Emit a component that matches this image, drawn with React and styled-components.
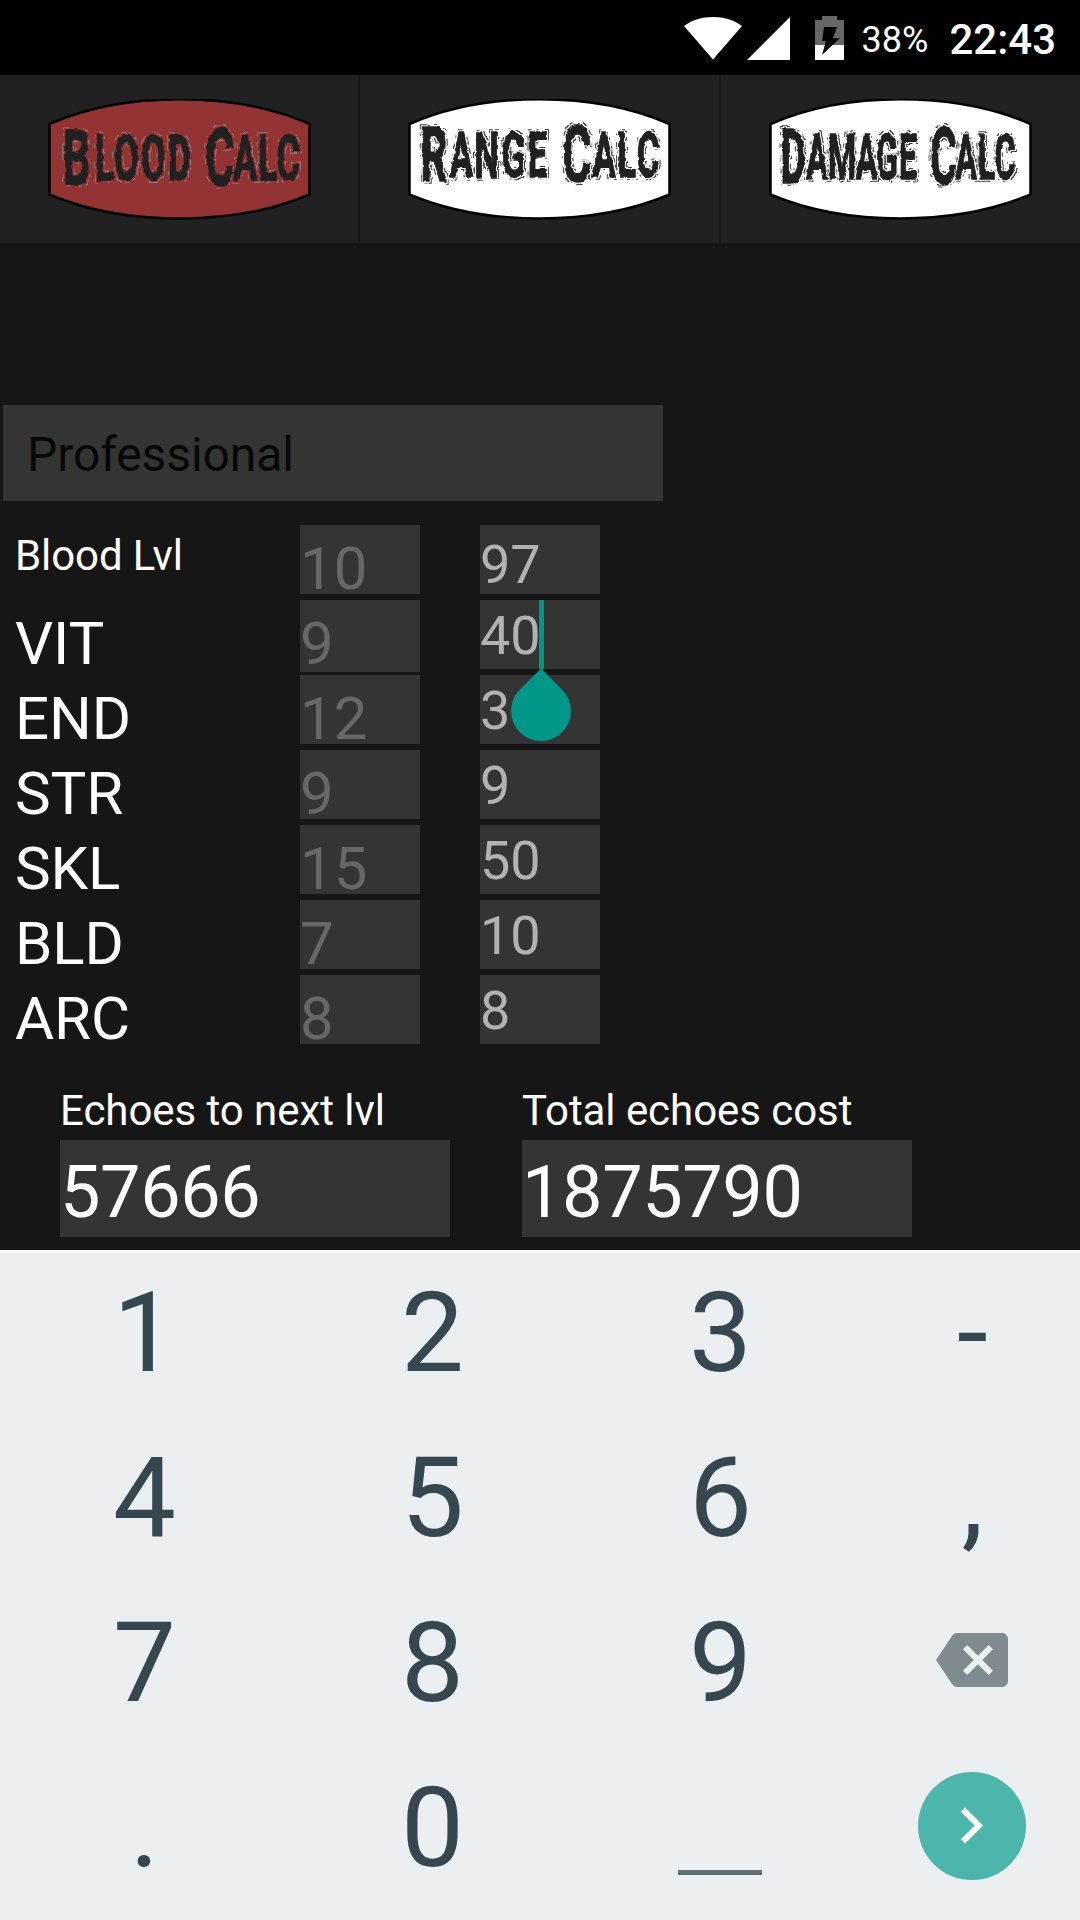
import React from "react";
import styled, { createGlobalStyle, ThemeProvider } from "styled-components";

const theme = {
  background: "#161616",
  tab: "#212121",
  field: "#343434",
  accent: "#009688",
  blood: "#943333",
  hint: "#676767",
  value: "#b2b2b2",
  keyboard: "#ebeff2",
  key: "#37474f",
};

const GlobalStyle = createGlobalStyle`
  * {
    box-sizing: border-box;
  }

  body {
    margin: 0;
    background-color: #161616;
    font-family: Roboto, "Noto Sans", sans-serif;
  }
`;

const St = {
  Screen: styled.div`
    display: flex;
    flex-direction: column;
    width: 1080px;
    height: 1920px;
    overflow: hidden;
    background-color: ${({ theme }) => theme.background};
  `,

  StatusBar: styled.header`
    display: flex;
    justify-content: flex-end;
    align-items: center;
    height: 75px;
    padding: 4px 24px 0 0;
    background-color: black;
    color: white;
  `,

  StatusIcon: styled.svg`
    display: block;
    width: ${({ $width }) => $width}px;
    height: 44px;
    margin: 0 ${({ $gap }) => $gap}px 4px 0;
  `,

  BatteryLevel: styled.span`
    font-size: 36px;
    margin-right: 21px;
  `,

  Clock: styled.span`
    font-size: 42px;
    font-weight: 500;
  `,

  Tabs: styled.nav`
    display: grid;
    grid-template-columns: 360px 361px 359px;
    height: 168px;
  `,

  Tab: styled.div`
    display: flex;
    padding: 24px 0 0 48px;
    background-color: ${({ theme }) => theme.tab};
    border-right: ${({ $last }) => ($last ? "none" : "2px solid #171717")};
  `,

  Badge: styled.svg`
    display: block;
    width: 263px;
    height: 121px;
  `,

  BadgeText: styled.text`
    font-family: Roboto, "Liberation Sans", sans-serif;
    font-weight: 700;
    font-size: 63px;
    fill: #212121;
    stroke: #212121;
    stroke-width: 1.4px;
    text-anchor: middle;
    text-transform: uppercase;
  `,

  Calculator: styled.main`
    display: flex;
    flex-direction: column;
    height: 1007px;
    padding-top: 162px;
  `,

  OriginSelect: styled.div`
    width: 660px;
    height: 96px;
    margin: 0 0 24px 3px;
    padding: 2px 24px 0;
    background-color: ${({ theme }) => theme.field};
    color: #070707;
    font-size: 48px;
    line-height: 96px;
    letter-spacing: -0.1px;
  `,

  StatList: styled.section`
    display: grid;
    grid-auto-rows: 69px;
    row-gap: 6px;
  `,

  StatRow: styled.div`
    display: grid;
    grid-template-columns: 285px 120px 120px;
    padding-left: 15px;
  `,

  StatName: styled.span`
    color: white;
    font-size: ${({ $small }) => ($small ? 42 : 60)}px;
    line-height: ${({ $small }) => ($small ? 61 : 87)}px;
    letter-spacing: -0.1px;
    white-space: nowrap;
  `,

  BaseValue: styled.span`
    height: ${({ $tall }) => ($tall ? 72 : 69)}px;
    background-color: ${({ theme }) => theme.field};
    color: ${({ theme }) => theme.hint};
    font-size: 60px;
    line-height: 87px;
  `,

  TargetValue: styled.span`
    position: relative;
    width: 120px;
    height: 69px;
    margin-left: 60px;
    background-color: ${({ theme }) => theme.field};
    color: ${({ theme }) => theme.value};
    font-size: 54px;
    line-height: ${({ $level }) => ($level ? 79 : 71)}px;
  `,

  Caret: styled.i`
    position: absolute;
    top: 0;
    left: 59px;
    width: 5px;
    height: 69px;
    background-color: ${({ theme }) => theme.accent};
  `,

  CaretHandle: styled.i`
    position: absolute;
    z-index: 1;
    top: 81px;
    left: 31px;
    width: 60px;
    height: 60px;
    border-radius: 0 50% 50% 50%;
    background-color: ${({ theme }) => theme.accent};
    transform: rotate(45deg);
  `,

  Totals: styled.section`
    display: flex;
    gap: 72px;
    margin-top: 37px;
    padding-left: 60px;
  `,

  Total: styled.div`
    width: 390px;
    color: white;
  `,

  TotalLabel: styled.div`
    height: 59px;
    font-size: 42px;
    line-height: 59px;
    letter-spacing: -0.05px;
  `,

  TotalValue: styled.div`
    height: 97px;
    background-color: ${({ theme }) => theme.field};
    font-size: 72px;
    line-height: 106px;
    letter-spacing: -0.4px;
  `,

  Keyboard: styled.section`
    display: grid;
    grid-template-columns: 288px 288px 288px 216px;
    grid-auto-rows: 165px;
    height: 670px;
    background-color: ${({ theme }) => theme.keyboard};
    box-shadow: inset 0 3px #f7f9fa;
  `,

  Key: styled.div`
    display: flex;
    justify-content: center;
    align-items: center;
    color: ${({ theme }) => theme.key};
    font-size: 112px;
    line-height: 165px;
  `,

  KeyLabel: styled.span`
    padding-left: 1px;
  `,

  KeyIcon: styled.svg`
    display: block;
    width: 72px;
    height: 72px;
    margin-bottom: 5px;
    fill: ${({ $color }) => $color};
  `,

  SpaceMark: styled.i`
    align-self: flex-end;
    width: 84px;
    height: 5px;
    margin-bottom: 35px;
    background-color: #5f6f76;
  `,

  NextButton: styled.span`
    display: flex;
    justify-content: center;
    align-items: center;
    width: 108px;
    height: 108px;
    margin-bottom: 3px;
    border-radius: 50%;
    background-color: #4db6ac;
  `,
};

// centers: x of every letter, the space between the words included
const tabs = [
  {
    name: "Blood Calc",
    active: true,
    baseline: 82,
    squeeze: 0.56,
    centers: [28.5, 56.5, 78.5, 105.5, 131.5, 152, 172, 197, 219.5, 240],
  },
  {
    name: "Range Calc",
    baseline: 79,
    squeeze: 0.55,
    centers: [26, 53.5, 78.5, 105.5, 129.5, 150, 169, 196, 218.5, 240],
  },
  {
    name: "Damage Calc",
    baseline: 81,
    squeeze: 0.51,
    centers: [24, 48, 73, 97.5, 118, 139, 155, 174.5, 197, 217.5, 236],
  },
];

const stats = [
  { name: "Blood Lvl", base: 10, target: 97, level: true },
  { name: "VIT", base: 9, target: 40, focused: true },
  { name: "END", base: 12, target: 30 },
  { name: "STR", base: 9, target: 9 },
  { name: "SKL", base: 15, target: 50 },
  { name: "BLD", base: 7, target: 10 },
  { name: "ARC", base: 8, target: 8 },
];

const keys = [
  "1", "2", "3", "-",
  "4", "5", "6", ",",
  "7", "8", "9", "backspace",
  ".", "0", "space", "next",
];

const StatusBar = () => (
  <St.StatusBar>
    <St.StatusIcon $width={58} $gap={5} viewBox="0 0 58 44">
      <path d="M29 43.5 0 10C8 4 18 1 29 1s21 3 29 9z" fill="white" />
    </St.StatusIcon>
    <St.StatusIcon $width={43} $gap={25} viewBox="0 0 43 44">
      <path d="M43 1v43H0z" fill="white" />
    </St.StatusIcon>
    <St.StatusIcon $width={29} $gap={18} viewBox="0 0 29 44">
      <path d="M7 0h15v4h7v25H0V4h7z" fill="#676767" />
      <path d="M0 29h29v15H0z" fill="white" />
      <path d="M9 11h13l-4 11h7L7 39l4-14H7z" fill="black" />
    </St.StatusIcon>
    <St.BatteryLevel>38%</St.BatteryLevel>
    <St.Clock>22:43</St.Clock>
  </St.StatusBar>
);

const TabBadge = ({ name, active, baseline, squeeze, centers }) => {
  const [first, second] = name.split(" ");
  return (
    <St.Badge viewBox="0 0 263 121">
      <defs>
        {/* worn print: ragged edges and a broken hairline around the letters */}
        <filter
          id={`worn-${first}`}
          x="-5%"
          y="-15%"
          width="110%"
          height="130%"
          colorInterpolationFilters="sRGB"
        >
          <feTurbulence type="fractalNoise" baseFrequency="0.16" numOctaves="2" seed="4" result="noise" />
          <feDisplacementMap in="SourceGraphic" in2="noise" scale="4" xChannelSelector="R" yChannelSelector="G" result="ragged" />
          <feMorphology in="ragged" operator="dilate" radius="2" result="outer" />
          <feMorphology in="ragged" operator="dilate" radius="1" result="inner" />
          <feComposite in="outer" in2="inner" operator="out" result="ring" />
          <feColorMatrix in="noise" values="0 0 0 0 0  0 0 0 0 0  0 0 0 0 0  14 0 0 0 -7" result="gaps" />
          <feComposite in="ring" in2="gaps" operator="in" result="broken" />
          <feFlood floodColor={active ? "#8f7c80" : "#3a3a3a"} result="ink" />
          <feComposite in="ink" in2="broken" operator="in" result="hairline" />
          <feMerge>
            <feMergeNode in="hairline" />
            <feMergeNode in="ragged" />
          </feMerge>
        </filter>
      </defs>
      <path
        d="M1.5 25C77 -8 186 -8 261.5 25V95.5C186 127.5 77 127.5 1.5 95.5Z"
        fill={active ? theme.blood : "white"}
        stroke="black"
        strokeWidth="2.5"
      />
      <g filter={`url(#worn-${first})`}>
        <St.BadgeText
          transform={`scale(${squeeze} 1)`}
          x={centers.map((x) => x / squeeze).join(" ")}
          y={baseline - 0.5}
        >
          <tspan dy="4" fontSize="76">{first[0]}</tspan>
          <tspan dy="-4">{first.slice(1)}</tspan>{" "}
          <tspan dy="5" fontSize="80">{second[0]}</tspan>
          <tspan dy="-5">{second.slice(1)}</tspan>
        </St.BadgeText>
      </g>
    </St.Badge>
  );
};

const StatRow = ({ name, base, target, level, focused }) => (
  <St.StatRow>
    <St.StatName $small={level}>{name}</St.StatName>
    <St.BaseValue $tall={focused}>{base}</St.BaseValue>
    <St.TargetValue $level={level}>
      {target}
      {focused && <St.Caret />}
      {focused && <St.CaretHandle />}
    </St.TargetValue>
  </St.StatRow>
);

const KeyFace = ({ name }) => {
  switch (name) {
    case "backspace":
      return (
        <St.KeyIcon $color="#808b90" viewBox="0 0 24 24">
          <path d="M22 3H7c-.69 0-1.23.35-1.59.88L0 12l5.41 8.11c.36.53.9.89 1.59.89h15c1.1 0 2-.9 2-2V5c0-1.1-.9-2-2-2zm-3 12.59L17.59 17 14 13.41 10.41 17 9 15.59 12.59 12 9 8.41 10.41 7 14 10.59 17.59 7 19 8.41 15.41 12z" />
        </St.KeyIcon>
      );
    case "space":
      return <St.SpaceMark />;
    case "next":
      return (
        <St.NextButton>
          <St.KeyIcon $color="white" viewBox="0.3 -0.5 24 24">
            <path d="M10 6 8.59 7.41 13.17 12l-4.58 4.59L10 18l6-6z" />
          </St.KeyIcon>
        </St.NextButton>
      );
    default:
      return <St.KeyLabel>{name}</St.KeyLabel>;
  }
};

const App = () => (
  <ThemeProvider theme={theme}>
    <GlobalStyle />
    <St.Screen>
      <StatusBar />
      <St.Tabs>
        {tabs.map((tab, index) => (
          <St.Tab key={tab.name} $last={index === tabs.length - 1}>
            <TabBadge {...tab} />
          </St.Tab>
        ))}
      </St.Tabs>
      <St.Calculator>
        <St.OriginSelect>Professional</St.OriginSelect>
        <St.StatList>
          {stats.map((stat) => (
            <StatRow key={stat.name} {...stat} />
          ))}
        </St.StatList>
        <St.Totals>
          <St.Total>
            <St.TotalLabel>Echoes to next lvl</St.TotalLabel>
            <St.TotalValue>57666</St.TotalValue>
          </St.Total>
          <St.Total>
            <St.TotalLabel>Total echoes cost</St.TotalLabel>
            <St.TotalValue>1875790</St.TotalValue>
          </St.Total>
        </St.Totals>
      </St.Calculator>
      <St.Keyboard>
        {keys.map((name) => (
          <St.Key key={name}>
            <KeyFace name={name} />
          </St.Key>
        ))}
      </St.Keyboard>
    </St.Screen>
  </ThemeProvider>
);

export default App;
